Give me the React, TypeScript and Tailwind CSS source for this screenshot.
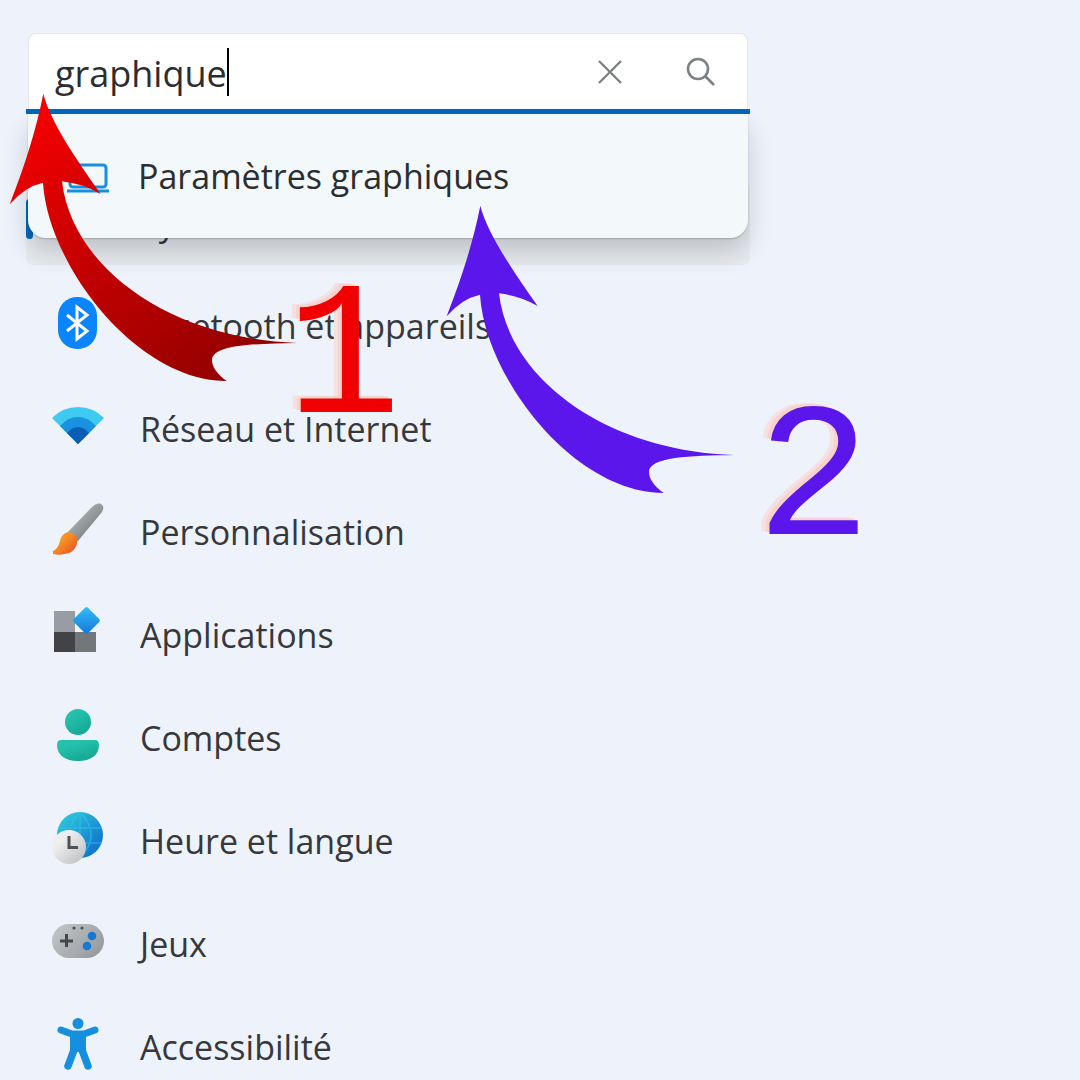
import { useState } from "react";
import type { ReactNode } from "react";

type NavItem = { label: string; icon: ReactNode; active?: boolean };

function SystemIcon() {
  return (
    <svg viewBox="0 0 52 52" className="size-[52px]" fill="none" stroke="#0f84d8" strokeWidth="3">
      <rect x="7" y="10" width="38" height="24" rx="3" />
      <path d="M3 38h46" />
    </svg>
  );
}

function BluetoothIcon() {
  return (
    <svg viewBox="0 0 52 52" className="size-[52px]" fill="none">
      <rect x="6" y="0" width="39" height="52" rx="19" fill="#0a84ff" />
      <path d="M15 18l20 16-10 8V10l10 8-20 16" stroke="#fff" strokeWidth="3" />
    </svg>
  );
}

function WifiIcon() {
  return (
    <svg viewBox="0 0 52 52" className="size-[52px]">
      <path d="M26 44L0 18Q11 7 26 7T52 18Z" fill="#3fcaf1" />
      <path d="M26 44L8 26Q16 17 26 17T44 26Z" fill="#1992df" />
      <path d="M26 44L15 33Q20 27 26 27T37 33Z" fill="#0b5cb5" />
    </svg>
  );
}

function BrushIcon() {
  return (
    <svg viewBox="0 0 52 52" className="size-[52px]">
      <defs>
        <linearGradient id="handle" x1="0" y1="0" x2="1" y2="1">
          <stop offset="0.2" stopColor="#b3b6b8" />
          <stop offset="1" stopColor="#66696c" />
        </linearGradient>
        <linearGradient id="bristles" x1="0" y1="0" x2="1" y2="1">
          <stop offset="0.4" stopColor="#f69122" />
          <stop offset="1" stopColor="#e2452b" />
        </linearGradient>
      </defs>
      <path d="M15 30L38 6Q45-1 49 1T50 9L26 38Z" fill="url(#handle)" />
      <path d="M1 48Q6 46 8 38C10 29 18 27 23 32C28 38 24 47 17 50Q8 53 1 51Z" fill="url(#bristles)" />
    </svg>
  );
}

function AppsIcon() {
  return (
    <svg viewBox="0 0 52 52" className="size-[52px]">
      <defs>
        <linearGradient id="tile" x1="0" y1="0" x2="1" y2="1">
          <stop offset="0" stopColor="#38bdf8" />
          <stop offset="1" stopColor="#1177d8" />
        </linearGradient>
      </defs>
      <rect x="2" y="5" width="21" height="21" fill="#989da3" />
      <rect x="2" y="26" width="21" height="20" fill="#424345" />
      <rect x="23" y="26" width="21" height="20" fill="#74777a" />
      <rect x="24.500" y="4.500" width="20" height="20" rx="2" fill="url(#tile)" transform="rotate(45 34.5 14.5)" />
    </svg>
  );
}

function AccountIcon() {
  return (
    <svg viewBox="0 0 52 52" className="size-[52px]">
      <defs>
        <linearGradient id="teal" x1="0" y1="0" x2="0.6" y2="1">
          <stop offset="0.3" stopColor="#25c1ad" />
          <stop offset="0.9" stopColor="#17ab98" />
        </linearGradient>
      </defs>
      <circle cx="26" cy="13" r="13" fill="url(#teal)" />
      <path d="M9 31H43Q47 31 47 36C47 46 39 52 26 52S5 46 5 36Q5 31 9 31Z" fill="url(#teal)" />
    </svg>
  );
}

function TimeIcon() {
  return (
    <svg viewBox="0 0 52 52" className="size-[52px]" fill="none">
      <defs>
        <linearGradient id="globe" x1="0" y1="0" x2="1" y2="1">
          <stop offset="0.2" stopColor="#2bbdd9" />
          <stop offset="0.8" stopColor="#1179d0" />
        </linearGradient>
        <linearGradient id="clock" x1="0" y1="0" x2="1" y2="1">
          <stop offset="0.3" stopColor="#eeeeef" />
          <stop offset="1" stopColor="#b9bbbd" />
        </linearGradient>
      </defs>
      <circle cx="28" cy="23" r="23" fill="url(#globe)" />
      <path d="M7 16H50M8 31H50M28 0V46M28 0Q50 23 28 46M28 0Q6 23 28 46" stroke="#36c3ea" strokeOpacity="0.55" strokeWidth="1.5" />
      <circle cx="17" cy="35" r="17" fill="url(#clock)" />
      <path d="M17 24V35.500H26" stroke="#505254" strokeWidth="3" />
    </svg>
  );
}

function GamesIcon() {
  return (
    <svg viewBox="0 0 52 52" className="size-[52px]" fill="none">
      <defs>
        <linearGradient id="pad" x1="0" y1="0" x2="1" y2="0.6">
          <stop offset="0" stopColor="#c6c9cb" />
          <stop offset="1" stopColor="#999da1" />
        </linearGradient>
      </defs>
      <rect x="0" y="9" width="52" height="34" rx="17" fill="url(#pad)" />
      <path d="M8 26H21M14.5 19V32" stroke="#45484b" strokeWidth="3" />
      <circle cx="22" cy="13" r="1.6" fill="#505356" />
      <circle cx="30" cy="13" r="1.6" fill="#505356" />
      <circle cx="40" cy="21" r="4.3" fill="#1379d4" />
      <circle cx="35" cy="31" r="4.3" fill="#1379d4" />
    </svg>
  );
}

function AccessibilityIcon() {
  return (
    <svg viewBox="0 0 52 52" className="size-[52px]" fill="none" stroke="#168fdf" strokeLinecap="round">
      <circle cx="26" cy="5.500" r="5.500" fill="#168fdf" stroke="none" />
      <path d="M9 12L20 16H32L43 12" strokeWidth="7" strokeLinejoin="round" />
      <path d="M18 15H34V34H18Z" fill="#168fdf" stroke="none" />
      <path d="M22 32L16 48M30 32L36 48" strokeWidth="7.500" />
    </svg>
  );
}

const navItems: NavItem[] = [
  { label: "Système", icon: <SystemIcon />, active: true },
  { label: "Bluetooth et appareils", icon: <BluetoothIcon /> },
  { label: "Réseau et Internet", icon: <WifiIcon /> },
  { label: "Personnalisation", icon: <BrushIcon /> },
  { label: "Applications", icon: <AppsIcon /> },
  { label: "Comptes", icon: <AccountIcon /> },
  { label: "Heure et langue", icon: <TimeIcon /> },
  { label: "Jeux", icon: <GamesIcon /> },
  { label: "Accessibilité", icon: <AccessibilityIcon /> },
];

function SearchBox() {
  const [query, setQuery] = useState("graphique");

  return (
    <div className="relative z-10">
      <div className="px-[2px]">
        <div className="flex h-[76px] items-center rounded-t-lg border border-b-0 border-[#e4e8ec] bg-white pr-[30px] pl-[26px]">
          <label htmlFor="search" className="sr-only">Rechercher un paramètre</label>
          <input
            id="search"
            type="text"
            autoComplete="off"
            value={query}
            onChange={(e) => setQuery(e.target.value)}
            className="field-sizing-content min-w-0 pt-1 text-[36px] leading-[52px] text-[#2b2d30] caret-transparent outline-none"
          />
          <span className="h-12 w-[2px] shrink-0 bg-black" />
          <div className="ml-auto flex shrink-0 gap-[59px]">
            <button type="button" aria-label="Effacer" onClick={() => setQuery("")}>
              <svg viewBox="0 0 32 32" className="size-8" fill="none" stroke="#7c8184" strokeWidth="2.400">
                <path d="M5 5L27 27M27 5L5 27" />
              </svg>
            </button>
            <button type="button" aria-label="Rechercher">
              <svg viewBox="0 0 32 32" className="size-8" fill="none" stroke="#7c8184" strokeWidth="2.600">
                <circle cx="13" cy="13" r="10" />
                <path d="M20 20L29 29" />
              </svg>
            </button>
          </div>
        </div>
      </div>
      <div className="h-[5px] bg-[#0067c0]" />

      <div className="absolute inset-x-[2px] top-full rounded-b-[18px] bg-[#f3f8fb] shadow-[0_14px_24px_rgba(0,0,0,0.17),0_1px_2px_rgba(0,0,0,0.18)]">
        <a href="#graphiques" className="flex h-[124px] items-center gap-7 pl-[34px] text-[34px] leading-[48px] text-[#2b2d30]">
          <svg viewBox="0 0 48 52" className="h-[52px] w-12" fill="none" stroke="#168fdf" strokeWidth="3">
            <rect x="8" y="15" width="36" height="22" rx="3" />
            <path d="M5 41H47" />
          </svg>
          Paramètres graphiques
        </a>
      </div>
    </div>
  );
}

function CurvedArrow({ fill }: { fill: string }) {
  return (
    <svg viewBox="48 44 867 867" className="size-[289px]">
      <defs>
        <linearGradient id="red" x1="0" y1="0" x2="0.8" y2="1">
          <stop offset="0" stopColor="#ff0000" />
          <stop offset="0.42" stopColor="#cc0000" />
          <stop offset="0.95" stopColor="#960000" />
        </linearGradient>
      </defs>
      <path
        fill={fill}
        d="M151 46C172 130 250 243 323 347Q270 316 207 309C235 560 520 780 912 794C780 796 657 800 657 845C657 865 670 885 701 908C430 908 165 560 150 313Q95 325 50 378C100 250 130 150 151 46Z"
      />
    </svg>
  );
}

export default function App() {
  return (
    <main className="relative min-h-screen overflow-hidden bg-[#eef3fb] pt-[33px] pl-[26px] font-['Open_Sans','Noto_Sans',sans-serif] text-[#36383b]">
      <div className="w-[724px] max-w-full">
        <SearchBox />
        <nav className="mt-[67px]">
          <ul className="flex flex-col gap-[19px]">
            {navItems.map((item) => (
              <li key={item.label}>
                <a
                  href="#"
                  className={`relative flex h-[84px] items-center gap-9 rounded-lg pl-[26px] text-[34px] leading-[48px] ${item.active ? "bg-[#e7eaef]" : ""}`}
                >
                  {item.active && <span className="absolute top-[18px] left-0 h-10 w-[7px] rounded-full bg-[#0067c0]" />}
                  <span className="pb-1.5">{item.icon}</span>
                  <span>{item.label}</span>
                </a>
              </li>
            ))}
          </ul>
        </nav>
      </div>

      {/* step markers pinned over the settings */}
      <div className="pointer-events-none absolute top-[93px] left-[9px] z-20">
        <CurvedArrow fill="url(#red)" />
      </div>
      <div className="pointer-events-none absolute top-[205px] left-[446px] z-20">
        <CurvedArrow fill="#5b17eb" />
      </div>
      <div className="pointer-events-none absolute top-[265px] left-[286px] z-20 font-['Liberation_Mono',monospace] text-[192px] leading-[192px] text-[#f00000] [text-shadow:-4px_-2px_0_#fad2cd,-8px_-3px_0_#f4e2e2]">
        1
      </div>
      <div className="pointer-events-none absolute top-[387px] left-[756px] z-20 font-['Liberation_Mono',monospace] text-[192px] leading-[192px] text-[#5b17eb] [text-shadow:-4px_-2px_0_#fad2cd,-8px_-3px_0_#f4e2e2]">
        2
      </div>
    </main>
  );
}
